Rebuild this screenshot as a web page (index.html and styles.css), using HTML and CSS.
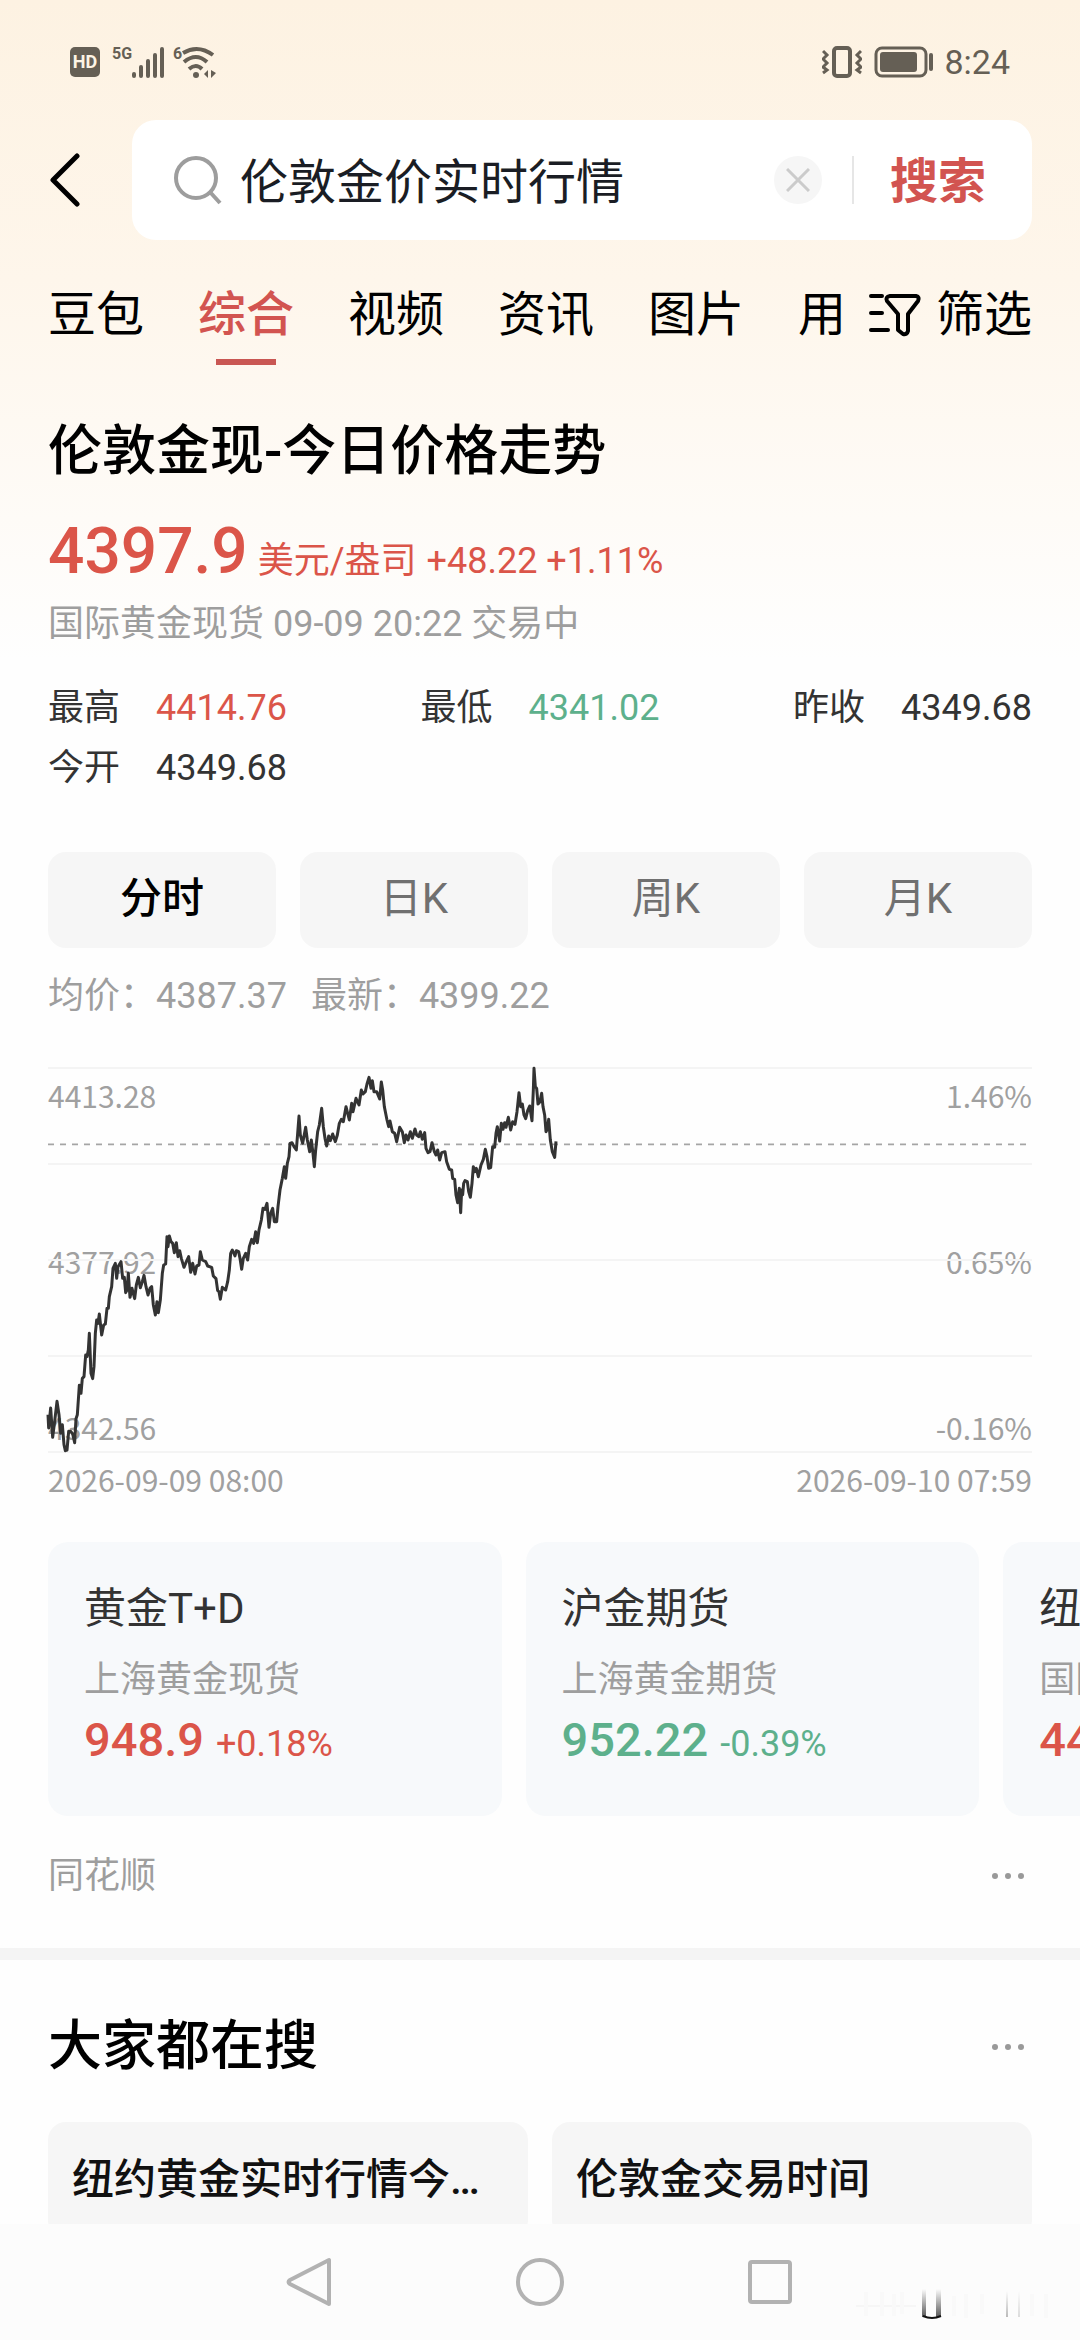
FILE: index.html
```html
<!DOCTYPE html>
<html lang="zh-CN">
<head>
    <meta charset="UTF-8">
    <meta name="viewport" content="width=device-width, initial-scale=1.0">
    <title>伦敦金价实时行情</title>
    <link rel="stylesheet" href="styles.css">
</head>
<body>

<div class="screen">
    <div class="status-bar">
        <div class="status-left">
            <span class="hd">HD</span>
            <span class="net">5G</span>
            <svg class="signal" width="33" height="31" viewBox="0 0 33 31" stroke="#655f55" stroke-width="4" stroke-linecap="round">
                <path d="M2 27v2M9 20v9M16 14v15M23 8v21M30 2v27"/>
            </svg>
            <span class="net wifi-gen">6</span>
            <svg width="35" height="33" viewBox="0 0 35 33" fill="none" stroke="#655f55" stroke-width="4">
                <path d="M1 7Q16 -2 31 9M2 16Q14 6 25 16M7 23Q14 17 20 23"/>
                <circle cx="14" cy="29" r="3" fill="#655f55" stroke="none"/>
                <path d="M26 24v8l-4-4zM29 24v8l5-5z" fill="#655f55" stroke="none"/>
            </svg>
        </div>
        <div class="status-right">
            <svg width="40" height="32" viewBox="0 0 40 32" fill="none" stroke="#655f55" stroke-width="3">
                <rect x="12" y="2" width="16" height="28" rx="3" stroke-width="4"/>
                <path d="M1 5l4 4-4 4 4 4-4 4 4 3-4 3M39 5l-4 4 4 4-4 4 4 4-4 3 4 3"/>
            </svg>
            <svg class="battery" width="60" height="32" viewBox="0 0 60 32" fill="none" stroke="#655f55" stroke-width="3">
                <rect x="2" y="2" width="50" height="28" rx="6"/>
                <rect x="6" y="6" width="37" height="20" rx="3" fill="#655f55" stroke="none"/>
                <path d="M57 9v14" stroke-width="4" stroke-linecap="round"/>
            </svg>
            <span class="time">8:24</span>
        </div>
    </div>

    <header class="search-row">
        <button class="icon-btn back-btn" aria-label="返回">
            <svg width="32" height="56" viewBox="0 0 32 56" fill="none" stroke="#000" stroke-width="5" stroke-linecap="round" stroke-linejoin="round">
                <path d="M29 4L5 28l24 24"/>
            </svg>
        </button>
        <form class="search-box">
            <svg width="48" height="50" viewBox="0 0 48 50" fill="none" stroke="#9d9d9d" stroke-width="4">
                <circle cx="22" cy="23" r="20"/>
                <path d="M36 37l10 11"/>
            </svg>
            <input class="search-input" type="text" value="伦敦金价实时行情" aria-label="搜索内容">
            <button class="icon-btn clear-btn" type="button" aria-label="清除">
                <svg width="24" height="24" viewBox="0 0 24 24" stroke="#cbcbcb" stroke-width="3">
                    <path d="M1 1l22 22M23 1L1 23"/>
                </svg>
            </button>
            <button class="search-btn" type="button">搜索</button>
        </form>
    </header>

    <div class="tab-row">
        <nav class="tabs">
            <a href="#">豆包</a>
            <a href="#" class="active">综合</a>
            <a href="#">视频</a>
            <a href="#">资讯</a>
            <a href="#">图片</a>
            <a href="#">用</a>
        </nav>
        <button class="filter-btn">
            <svg width="54" height="44" viewBox="0 0 54 44" fill="none" stroke="#000" stroke-width="4" stroke-linecap="round" stroke-linejoin="round">
                <path d="M3 3h11M3 20h11M3 37h17"/>
                <path d="M22 3h26q4 1 2 5L40 21v17q-1 4-5 3l-5-4V21L19 8q-2-4 3-5z"/>
            </svg>
            <span>筛选</span>
        </button>
    </div>

    <main class="content">
        <section class="quote">
            <h1>伦敦金现-今日价格走势</h1>
            <div class="price-line up">
                <span class="price">4397.9</span>
                <span>美元/盎司</span>
                <span>+48.22 +1.11%</span>
            </div>
            <p class="muted market">国际黄金现货 09-09 20:22 交易中</p>

            <dl class="stats">
                <div><dt>最高</dt><dd class="up">4414.76</dd></div>
                <div><dt>最低</dt><dd class="down">4341.02</dd></div>
                <div><dt>昨收</dt><dd>4349.68</dd></div>
                <div><dt>今开</dt><dd>4349.68</dd></div>
            </dl>

            <div class="periods">
                <button class="active">分时</button>
                <button>日K</button>
                <button>周K</button>
                <button>月K</button>
            </div>

            <div class="averages muted">
                <span>均价：4387.37</span>
                <span>最新：4399.22</span>
            </div>

            <div class="chart">
                <div class="axis">
                    <div><span>4413.28</span><span>1.46%</span></div>
                    <div><span>4377.92</span><span>0.65%</span></div>
                    <div><span>4342.56</span><span>-0.16%</span></div>
                </div>
                <svg class="plot" viewBox="0 0 2952 1152" fill="none">
                    <!-- grid -->
                    <path d="M0 0H2952M0 288H2952M0 576H2952M0 864H2952M0 1152H2952" stroke="#f4f4f4" stroke-width="6"/>
                    <!-- latest price -->
                    <path d="M0 229H2952" stroke="#a5a5a5" stroke-width="5" stroke-dasharray="18 18"/>
                    <polyline stroke="#333" stroke-width="9" stroke-linejoin="round" points="
                        0,1040 2,1080 8,1020 14,1108 20,1060 27,1000 33,1040 38,1096 43,1070 48,1130 52,1148 57,1146 62,1090 68,1090 74,1098 80,1124 84,1052 88,1040 94,952 99,976
                        103,931 108,926 113,861 117,866 121,846 124,796 129,916 134,932 138,896 142,796 146,756 150,766 154,738 161,801 167,771 172,768 177,721 181,721 184,686 191,656
                        195,601 202,586 206,631 210,596 219,581 224,631 229,628 233,674 237,666 241,616 246,688 252,661 260,692 265,651 271,628 277,659 283,641 288,622 294,656 300,681
                        306,661 311,656 316,711 322,741 327,701 331,734 337,696 343,616 347,591 353,588 357,506 360,536 364,504 369,521 374,526 379,554 385,524 390,566 395,548 400,571
                        408,598 415,581 422,566 428,613 434,586 441,618 446,594 453,591 457,551 463,576 473,581 479,594 491,598 496,624 504,632 509,668 513,671 517,694 523,658 533,666
                        539,641 544,606 548,556 553,546 561,564 565,548 572,551 576,571 581,604 586,571 593,556 599,576 604,536 611,514 617,526 623,491 628,524 633,486 640,456 645,421
                        651,424 657,406 663,478 668,436 674,421 679,461 686,461 690,416 696,366 703,331 709,296 713,331 718,286 723,266 726,226 732,224 738,236 745,246 749,196 753,144
                        757,201 764,226 773,178 778,216 785,251 790,216 795,256 799,296 803,246 809,191 814,171 821,121 826,176 831,211 836,234 842,204 847,218 854,198 862,221 868,201
                        874,166 880,154 886,161 894,116 904,156 911,106 915,131 924,91 933,111 940,66 945,78 952,71 957,48 963,28 969,61 973,38 978,71 986,71 995,93 1000,42
                        1004,66 1009,116 1017,156 1022,176 1026,159 1033,191 1040,196 1046,221 1055,178 1063,191 1069,224 1074,201 1080,216 1087,191 1093,211 1101,183 1106,201 1112,206 1117,191 1123,214
                        1130,194 1134,241 1140,254 1146,251 1152,224 1159,251 1164,261 1169,246 1175,276 1181,254 1191,251 1196,281 1204,304 1211,306 1214,331 1220,334 1224,381 1229,404 1234,361 1238,434
                        1241,366 1244,380 1247,346 1251,338 1258,341 1262,371 1267,388 1272,346 1276,296 1281,311 1285,301 1291,326 1299,291 1306,274 1312,244 1317,266 1322,301 1328,299 1334,236 1340,238
                        1344,196 1348,176 1355,219 1360,166 1365,184 1370,164 1374,178 1381,148 1388,186 1394,161 1401,169 1407,131 1413,74 1418,116 1423,108 1428,141 1433,152 1439,128 1445,114 1452,158
                        1456,66 1458,1 1462,56 1466,61 1470,108 1476,101 1481,76 1485,116 1490,141 1494,191 1498,184 1502,154 1507,216 1513,251 1520,268 1524,220"/>
                </svg>
            </div>
            <div class="dates">
                <span>2026-09-09 08:00</span>
                <span>2026-09-10 07:59</span>
            </div>
        </section>

        <div class="related">
            <article class="related-card">
                <h3>黄金T+D</h3>
                <p class="muted">上海黄金现货</p>
                <div class="up"><b>948.9</b><span>+0.18%</span></div>
            </article>
            <article class="related-card">
                <h3>沪金期货</h3>
                <p class="muted">上海黄金期货</p>
                <div class="down"><b>952.22</b><span>-0.39%</span></div>
            </article>
            <article class="related-card">
                <h3>纽约</h3>
                <p class="muted">国际</p>
                <div class="up"><b>44</b></div>
            </article>
        </div>

        <div class="source muted">
            <span>同花顺</span>
            <button class="icon-btn more-btn" aria-label="更多">
                <svg width="36" height="8" viewBox="0 0 36 8" fill="#999">
                    <circle cx="5" cy="4" r="3"/><circle cx="18" cy="4" r="3"/><circle cx="31" cy="4" r="3"/>
                </svg>
            </button>
        </div>

        <section class="hot">
            <div class="hot-head">
                <h2>大家都在搜</h2>
                <button class="icon-btn more-btn" aria-label="更多">
                    <svg width="36" height="8" viewBox="0 0 36 8" fill="#999">
                        <circle cx="5" cy="4" r="3"/><circle cx="18" cy="4" r="3"/><circle cx="31" cy="4" r="3"/>
                    </svg>
                </button>
            </div>
            <div class="hot-list">
                <a href="#">纽约黄金实时行情今…</a>
                <a href="#">伦敦金交易时间</a>
            </div>
        </section>
    </main>

    <footer class="nav-bar">
        <button class="icon-btn" aria-label="后退">
            <svg width="50" height="50" viewBox="0 0 50 50" fill="none" stroke="#b2b2b2" stroke-width="4" stroke-linejoin="round">
                <path d="M44 3v44L5 27q-3-2 0-4z"/>
            </svg>
        </button>
        <button class="icon-btn" aria-label="主屏幕">
            <svg width="50" height="50" viewBox="0 0 50 50" fill="none" stroke="#b2b2b2" stroke-width="4">
                <circle cx="25" cy="25" r="22"/>
            </svg>
        </button>
        <button class="icon-btn" aria-label="最近任务">
            <svg width="50" height="50" viewBox="0 0 50 50" fill="none" stroke="#b2b2b2" stroke-width="4">
                <rect x="5" y="5" width="40" height="40" rx="2"/>
            </svg>
        </button>
        <svg class="smudge" width="200" height="36" viewBox="0 0 200 36">
            <defs>
                <linearGradient id="fade" x1="0" y1="0" x2="0" y2="1">
                    <stop offset="0" stop-color="#222" stop-opacity="0"/>
                    <stop offset="1" stop-color="#222" stop-opacity="0.75"/>
                </linearGradient>
            </defs>
            <path d="M0 20H60" stroke="#f6f6f6" stroke-width="2"/>
            <path d="M10 6v24M26 6v24M38 8v22M46 6v22M98 10v20M110 8v24M126 8v20M176 8v22M190 8v24" stroke="#f9f9f9" stroke-width="4"/>
            <rect x="66" y="3" width="4" height="28" fill="url(#fade)"/>
            <rect x="80" y="3" width="5" height="28" fill="url(#fade)"/>
            <path d="M67 30q9 4 18 0" fill="none" stroke="#111" stroke-width="2"/>
            <rect x="150" y="5" width="2" height="26" fill="url(#fade)" opacity="0.4"/>
            <rect x="162" y="5" width="2" height="26" fill="url(#fade)" opacity="0.2"/>
        </svg>
    </footer>
</div>

</body>
</html>
```

FILE: styles.css
```css
* {
    box-sizing: border-box;
    margin: 0;
    padding: 0;
}

body {
    font-family: Roboto, "Noto Sans CJK SC", sans-serif;
    font-size: 36px;
    line-height: 48px;
    color: #333;
    background: #fefefe;
}

button {
    font-family: inherit;
    border: none;
    background: none;
    cursor: pointer;
}

a {
    color: inherit;
    text-decoration: none;
}

svg {
    display: block;
    flex-shrink: 0;
}

.icon-btn {
    display: flex;
    align-items: center;
    justify-content: center;
}

.screen {
    display: flex;
    flex-direction: column;
    height: 100vh;
    overflow: hidden;
    background: linear-gradient(#fdf2e2 0, #fef6eb 280px, #fefefe 660px);
}

.up {
    color: #db5549;
}

.down {
    color: #5db08c;
}

.muted {
    color: #9e9e9e;
}

/* Status bar */
.status-bar {
    display: flex;
    justify-content: space-between;
    align-items: center;
    height: 120px;
    padding: 4px 70px 0;
    color: #655f55;
}

.status-left,
.status-right {
    display: flex;
    align-items: center;
}

.hd {
    width: 30px;
    height: 30px;
    margin-right: 12px;
    border-radius: 5px;
    background: #655f55;
    color: #fdf4e5;
    font-size: 18px;
    font-weight: bold;
    line-height: 30px;
    text-align: center;
}

.net {
    align-self: flex-start;
    font-size: 16px;
    font-weight: bold;
    line-height: 16px;
}

.wifi-gen {
    margin-left: 8px;
}

.battery {
    margin: 0 10px 0 12px;
}

.time {
    font-size: 34px;
}

/* Search */
.search-row {
    display: flex;
    align-items: center;
    padding: 0 48px;
}

.back-btn {
    width: 84px;
    height: 120px;
    justify-content: flex-start;
}

.search-box {
    flex: 1;
    min-width: 0;
    display: flex;
    align-items: center;
    height: 120px;
    padding: 0 46px 0 42px;
    border-radius: 24px;
    background: #fff;
}

.search-input {
    flex: 1;
    min-width: 0;
    height: 72px;
    margin-left: 18px;
    padding-bottom: 4px;
    border: none;
    outline: none;
    background: none;
    font-family: inherit;
    font-size: 48px;
    color: #1a1d24;
}

.clear-btn {
    width: 48px;
    height: 48px;
    border-radius: 50%;
    background: #f6f6f6;
}

.search-btn {
    margin-left: 30px;
    padding: 4px 0 0 38px;
    background: linear-gradient(#e6e6e6, #e6e6e6) left center / 2px 48px no-repeat;
    font-size: 48px;
    font-weight: bold;
    line-height: 48px;
    color: #d25450;
}

/* Tabs */
.tab-row {
    display: flex;
    align-items: flex-start;
    justify-content: space-between;
    padding: 47px 48px 0;
    font-size: 48px;
    line-height: 56px;
    color: #000;
}

.tabs {
    display: flex;
    gap: 54px;
    min-width: 0;
    overflow: hidden;
}

.tabs a {
    flex-shrink: 0;
    padding-bottom: 22px;
}

.tabs .active {
    color: #d25450;
    font-weight: 500;
    background: linear-gradient(#c95753, #c95753) center bottom / 60px 6px no-repeat;
}

.filter-btn {
    display: flex;
    align-items: center;
    gap: 14px;
    font-size: 48px;
    line-height: 56px;
    color: #000;
}

/* Quote */
.content {
    flex: 1;
    min-height: 0;
    overflow: hidden;
}

.quote {
    padding: 51px 48px 0;
}

h1,
h2 {
    font-size: 54px;
    font-weight: 500;
    line-height: 72px;
    color: #000;
}

.price-line {
    display: flex;
    align-items: baseline;
    gap: 10px;
    margin-top: 25px;
}

.price {
    font-size: 64px;
    font-weight: 500;
    line-height: 78px;
}

.market {
    margin-top: 9px;
}

.stats {
    display: grid;
    grid-template-columns: repeat(3, auto);
    justify-content: space-between;
    margin-top: 30px;
    line-height: 60px;
}

.stats div {
    display: flex;
    gap: 36px;
}

.periods {
    display: grid;
    grid-template-columns: repeat(4, 1fr);
    gap: 24px;
    margin-top: 54px;
}

.periods button {
    height: 96px;
    padding-bottom: 12px;
    border-radius: 18px;
    background: #f6f6f6;
    font-size: 42px;
    color: #707070;
}

.periods .active {
    font-weight: 500;
    color: #000;
}

.averages {
    display: flex;
    gap: 24px;
    margin-top: 24px;
}

/* Chart */
.chart {
    display: grid;
    margin-top: 48px;
}

.axis,
.plot {
    grid-area: 1 / 1;
}

.axis {
    display: flex;
    flex-direction: column;
    justify-content: space-between;
    padding: 6px 0 4px;
}

.axis div,
.dates {
    display: flex;
    justify-content: space-between;
    font-family: "Noto Sans CJK SC", sans-serif;
    font-size: 30px;
    line-height: 42px;
    color: #a0a0a0;
}

.plot {
    width: 100%;
    overflow: visible;
}

.dates {
    margin-top: 6px;
}

/* Related futures */
.related {
    display: flex;
    gap: 24px;
    margin-top: 42px;
    padding-left: 48px;
    overflow: hidden;
}

.related-card {
    flex: 0 0 42vw;
    padding: 37px 36px 42px;
    border-radius: 20px;
    background: #f7f9fb;
    white-space: nowrap;
}

.related-card h3 {
    margin-bottom: 17px;
    font-size: 42px;
    font-weight: normal;
    line-height: 60px;
}

.related-card div {
    display: flex;
    align-items: baseline;
    gap: 12px;
    margin-top: 6px;
    line-height: 60px;
}

.related-card b {
    font-size: 47px;
    font-weight: 500;
}

.source {
    display: flex;
    justify-content: space-between;
    align-items: center;
    padding: 36px 48px 48px;
}

.more-btn {
    width: 48px;
    height: 48px;
}

/* Hot searches */
.hot {
    padding: 51px 48px 0;
    border-top: 12px solid #f4f4f4;
}

.hot-head {
    display: flex;
    justify-content: space-between;
    align-items: center;
}

.hot-list {
    display: grid;
    grid-template-columns: 1fr 1fr;
    gap: 24px;
    margin-top: 39px;
}

.hot-list a {
    padding: 28px 24px;
    border-radius: 18px;
    background: #f6f6f6;
    font-size: 42px;
    font-weight: 500;
    line-height: 60px;
    color: #111;
    white-space: nowrap;
}

/* System navigation */
.nav-bar {
    position: relative;
    display: flex;
    justify-content: center;
    align-items: center;
    gap: 180px;
    height: 116px;
    background: #fcfcfc;
}

.smudge {
    position: absolute;
    right: 24px;
    bottom: 18px;
}
```
